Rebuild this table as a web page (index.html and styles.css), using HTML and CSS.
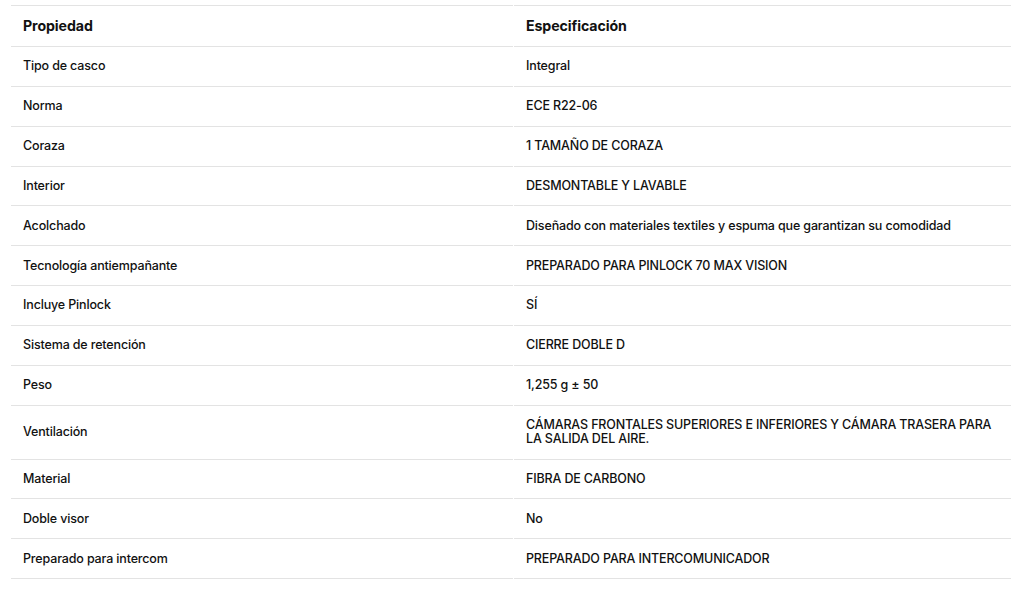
FILE: index.html
```html
<!DOCTYPE html>
<html lang="es">
<head>
<meta charset="utf-8">
<title>Especificaciones</title>
<link rel="stylesheet" href="styles.css">
</head>
<body>
<table class="specs">
  <colgroup><col class="c1"><col class="c2"></colgroup>
  <thead>
    <tr><th>Propiedad</th><th>Especificación</th></tr>
  </thead>
  <tbody>
    <tr><td>Tipo de casco</td><td>Integral</td></tr>
    <tr><td>Norma</td><td>ECE R22-06</td></tr>
    <tr><td>Coraza</td><td>1 TAMAÑO DE CORAZA</td></tr>
    <tr><td>Interior</td><td>DESMONTABLE Y LAVABLE</td></tr>
    <tr><td>Acolchado</td><td>Diseñado con materiales textiles y espuma que garantizan su comodidad</td></tr>
    <tr><td>Tecnología antiempañante</td><td>PREPARADO PARA PINLOCK 70 MAX VISION</td></tr>
    <tr><td>Incluye Pinlock</td><td>SÍ</td></tr>
    <tr><td>Sistema de retención</td><td>CIERRE DOBLE D</td></tr>
    <tr><td>Peso</td><td>1,255 g ± 50</td></tr>
    <tr><td>Ventilación</td><td>CÁMARAS FRONTALES SUPERIORES E INFERIORES Y CÁMARA TRASERA PARA LA SALIDA DEL AIRE.</td></tr>
    <tr><td>Material</td><td>FIBRA DE CARBONO</td></tr>
    <tr><td>Doble visor</td><td>No</td></tr>
    <tr><td>Preparado para intercom</td><td>PREPARADO PARA INTERCOMUNICADOR</td></tr>
  </tbody>
</table>
</body>
</html>
```
FILE: styles.css
```css
html, body {
  margin: 0;
  padding: 0;
  background: #ffffff;
}
body {
  font-family: "Inter", "Liberation Sans", sans-serif;
  color: #111111;
  overflow: hidden;
}
.specs {
  margin: 5px 0 0 10px;
  width: 1003px;
  table-layout: fixed;
  border-collapse: separate;
  border-spacing: 1px 0;
}
.specs .c1 { width: 502px; }
.specs th,
.specs td {
  text-align: left;
  vertical-align: middle;
  padding: 12.35px 12px;
  border-bottom: 1px solid #e3e3e3;
}
.specs th {
  font-size: 14.2px;
  line-height: 15.3px;
  letter-spacing: -0.1px;
  font-weight: 700;
  border-top: 1px solid #e3e3e3;
}
.specs td {
  font-size: 12.5px;
  line-height: 14.15px;
  letter-spacing: -0.15px;
  font-weight: 500;
}
.specs td + td,
.specs th + th {
  padding-right: 14px;
}
```
